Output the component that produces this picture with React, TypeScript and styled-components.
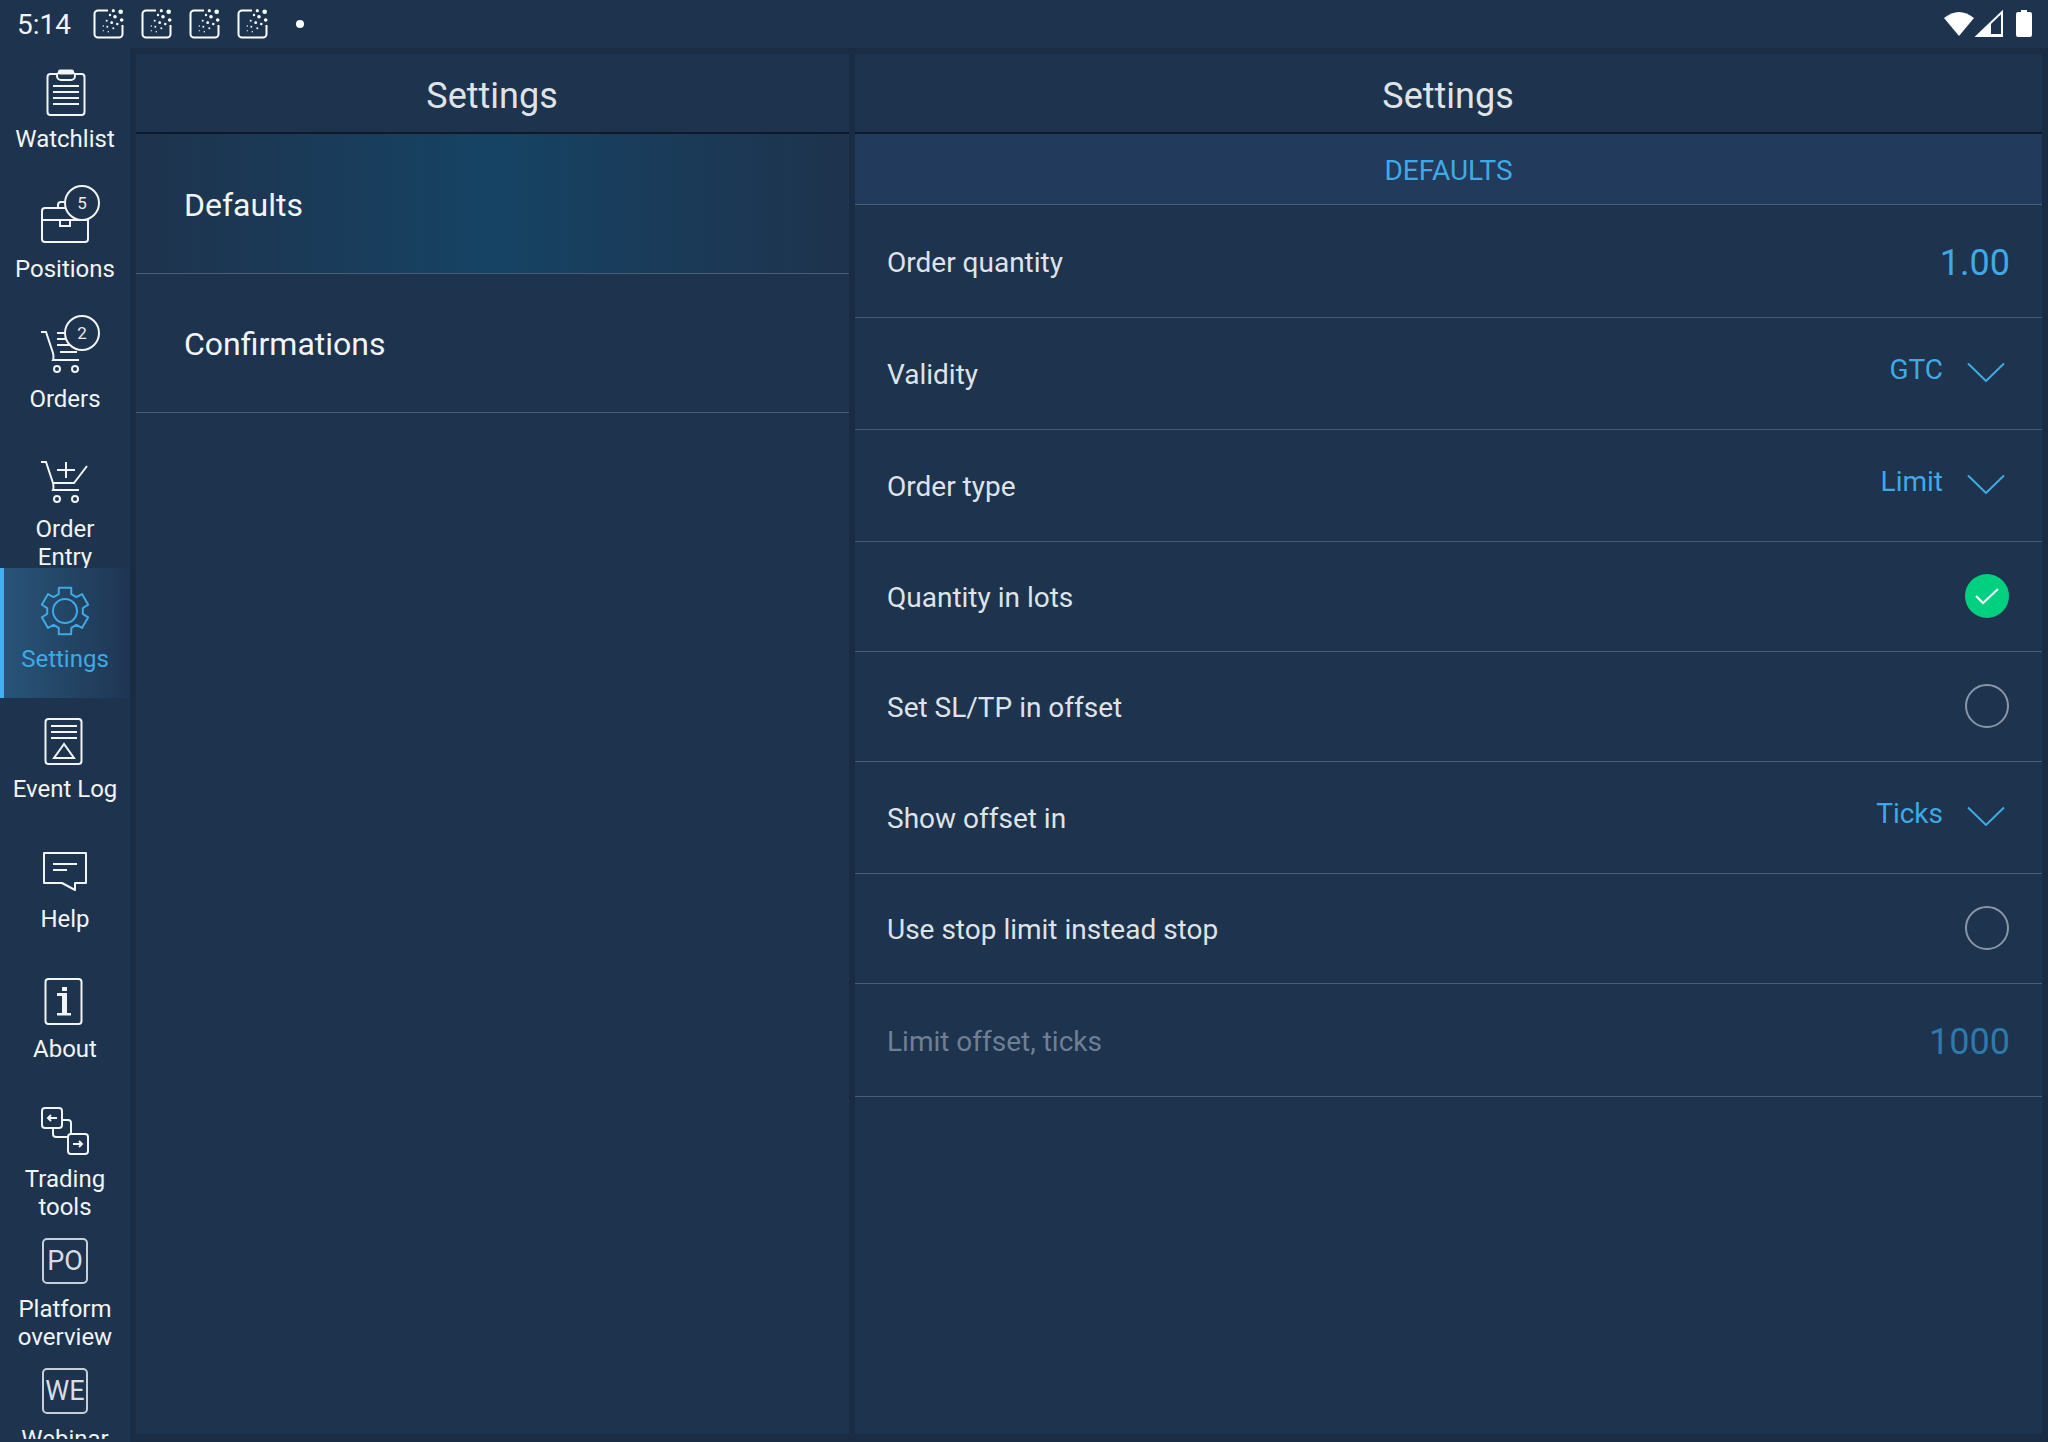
import React from 'react';
import styled, { createGlobalStyle } from 'styled-components';

const GlobalStyle = createGlobalStyle`
  html, body {
    margin: 0;
    padding: 0;
    background: #1e334d;
  }
  * {
    box-sizing: border-box;
  }
`;

const Screen = styled.div`
  width: 2048px;
  height: 1442px;
  display: flex;
  flex-direction: column;
  overflow: hidden;
  background: #1e334d;
  color: #fff;
  font-family: Roboto, 'Liberation Sans', sans-serif;
`;

const StatusBar = styled.div`
  height: 48px;
  flex: none;
  display: flex;
  align-items: center;
  padding: 0 16px 0 17px;
`;

const Clock = styled.span`
  width: 69px;
  font-size: 28px;
  color: #f2f4f6;
`;

const NotifySlot = styled.svg`
  width: 48px;
  height: 48px;
  flex: none;
`;

const StatusDot = styled.span`
  width: 8px;
  height: 8px;
  margin-left: 18px;
  border-radius: 50%;
  background: #fff;
`;

const StatusRight = styled.svg`
  margin-left: auto;
  width: 92px;
  height: 48px;
  flex: none;
`;

const Body = styled.div`
  flex: 1;
  min-height: 0;
  display: flex;
`;

const Sidebar = styled.nav`
  width: 130px;
  flex: none;
  overflow: hidden;
  height: 1391px;
`;

const NavItem = styled.div<{ $active?: boolean }>`
  position: relative;
  height: 130px;
  overflow: hidden;
  display: flex;
  flex-direction: column;
  align-items: center;
  padding-top: 12px;
  color: ${({ $active }) => ($active ? '#3fa9e6' : '#f2f4f6')};
  background: ${({ $active }) => ($active ? 'linear-gradient(to right, #285579, #1f3653)' : 'none')};
  box-shadow: ${({ $active }) => ($active ? 'inset 4px 0 0 #3fb0f2' : 'none')};
`;

const IconSlot = styled.div`
  position: relative;
  width: 80px;
  height: 65px;
  flex: none;
  display: flex;
  align-items: flex-start;
  justify-content: center;
`;

const NavLabel = styled.span`
  font-size: 24px;
  line-height: 28px;
  text-align: center;
  white-space: pre-line;
`;

const Badge = styled.span`
  position: absolute;
  left: 39px;
  top: -5px;
  width: 36px;
  height: 36px;
  border: 2px solid #f2f4f6;
  border-radius: 50%;
  background: #1e334d;
  display: flex;
  align-items: center;
  justify-content: center;
  font-size: 17px;
  color: #e8ebee;
`;

const LetterBox = styled.span`
  width: 46px;
  height: 46px;
  margin-top: 8px;
  border: 2px solid #c9cfd6;
  border-radius: 5px;
  display: flex;
  align-items: center;
  justify-content: center;
  font-size: 27px;
  color: #d9dde2;
`;

const Panels = styled.div`
  flex: 1;
  min-width: 0;
  display: flex;
  gap: 6px;
  padding: 6px 6px 8px 6px;
  background: #1a2c44;
`;

const Panel = styled.section<{ $width?: number }>`
  flex: ${({ $width }) => ($width ? `0 0 ${$width}px` : '1')};
  min-width: 0;
  background: #1e334d;
`;

const PanelTitle = styled.h1`
  height: 80px;
  margin: 0;
  padding: 6px 1px 0 0;
  display: flex;
  align-items: center;
  justify-content: center;
  border-bottom: 2px solid #0e1a2b;
  font-size: 36px;
  font-weight: 400;
  color: #dfe3e8;
`;

const MenuRow = styled.div<{ $selected?: boolean }>`
  height: ${({ $selected }) => ($selected ? 140 : 139)}px;
  padding: 2px 0 0 48px;
  display: flex;
  align-items: center;
  border-bottom: 1px solid #4b5d76;
  font-size: 32px;
  color: #f2f4f6;
  background: ${({ $selected }) =>
    $selected ? 'linear-gradient(to right, #1e334d, #164364 50%, #1e334d)' : 'none'};
`;

const SectionHead = styled.div`
  height: 71px;
  padding-top: 2px;
  display: flex;
  align-items: center;
  justify-content: center;
  border-bottom: 1px solid #4b5d76;
  background: #223a5c;
  font-size: 28px;
  color: #3fa9e6;
`;

const Row = styled.div<{ $height: number }>`
  height: ${({ $height }) => $height}px;
  padding: 0 32px;
  display: flex;
  align-items: center;
  justify-content: space-between;
  border-bottom: 1px solid #4b5d76;
`;

const RowLabel = styled.span<{ $disabled?: boolean }>`
  margin-top: 2px;
  font-size: 28px;
  color: ${({ $disabled }) => ($disabled ? '#6e7f95' : '#dfe3e8')};
`;

const NumberValue = styled.span<{ $disabled?: boolean }>`
  margin-top: 4px;
  font-size: 36px;
  color: ${({ $disabled }) => ($disabled ? '#2e78ab' : '#3fa9e6')};
`;

const Select = styled.span`
  display: flex;
  align-items: center;
  gap: 24px;
  margin-right: 5px;
  margin-bottom: 8px;
  font-size: 28px;
  color: #3fa9e6;
`;

const Chevron = styled.svg`
  width: 38px;
  height: 20px;
  flex: none;
  margin-top: 4px;
`;

const CheckOn = styled.span`
  width: 44px;
  height: 44px;
  margin: 0 1px 2px 0;
  display: flex;
  align-items: center;
  justify-content: center;
  border-radius: 50%;
  background: #00d080;
`;

const CheckOff = styled.span`
  width: 44px;
  height: 44px;
  margin: 0 1px 2px 0;
  border: 2px solid #8a96a5;
  border-radius: 50%;
`;

const line = { fill: 'none', stroke: 'currentColor', strokeWidth: 2 };

function gearPath(cx: number, cy: number, outer: number, inner: number) {
  const pts: string[] = [];
  for (let i = 0; i < 6; i++) {
    const a = ((i * 60 - 90) * Math.PI) / 180;
    const at = (r: number, d: number) =>
      `${(cx + r * Math.cos(a + d)).toFixed(1)} ${(cy + r * Math.sin(a + d)).toFixed(1)}`;
    pts.push(at(inner, -0.36), at(outer, -0.26), at(outer, 0.26), at(inner, 0.36));
  }
  return `M${pts.join(' L')} Z`;
}

const IconSvg = ({ children }: { children: React.ReactNode }) => (
  <svg width="80" height="64" viewBox="0 0 80 64">
    <g {...line}>{children}</g>
  </svg>
);

const Filled = ({ x, y, w, h }: { x: number; y: number; w: number; h: number }) => (
  <rect x={x} y={y} width={w} height={h} fill="currentColor" stroke="none" />
);

const icons: Record<string, React.ReactNode> = {
  watchlist: (
    <IconSvg>
      <rect x="22.500" y="14" width="37" height="41" rx="3" />
      <rect x="32" y="12" width="18" height="8" rx="4" fill="#1e334d" />
      <rect x="33" y="9.500" width="16" height="5" rx="2" fill="currentColor" stroke="none" />
      <path d="M28 26H54M28 32H54M28 38H54M28 44H54" />
    </IconSvg>
  ),
  positions: (
    <IconSvg>
      <rect x="17" y="18" width="46" height="34" rx="3" />
      <path d="M33 18V15a3 3 0 0 1 3-3h4" />
      <path d="M17 30H35M45 30H63" />
      <path d="M35 30V36H45V30Z" />
    </IconSvg>
  ),
  orders: (
    <IconSvg>
      <path d="M16 12H21L28 33Q29 38 28 40H54" />
      <path d="M32 13H46M32 19H46M32 25H46M35 32H52" />
      <circle cx="32" cy="49" r="3" />
      <circle cx="50" cy="49" r="3" />
    </IconSvg>
  ),
  entry: (
    <IconSvg>
      <path d="M16 12H21L28 33Q29 38 28 40H54" />
      <path d="M28 33H49L62 16" />
      <path d="M41 12V28M32 20H50" />
      <circle cx="32" cy="49" r="3" />
      <circle cx="50" cy="49" r="3" />
    </IconSvg>
  ),
  settings: (
    <IconSvg>
      <path d={gearPath(40, 31, 24, 18)} strokeLinejoin="round" />
      <circle cx="40" cy="31" r="12" />
    </IconSvg>
  ),
  eventlog: (
    <IconSvg>
      <rect x="20.500" y="9" width="36" height="45" rx="3" />
      <path d="M26 16H52M26 22H52M26 28H52" />
      <path d="M39 34L29 48H49Z" />
    </IconSvg>
  ),
  help: (
    <IconSvg>
      <path d="M19 13H61V43H50V50L37 43H19Z" strokeLinejoin="round" />
      <path d="M28 24H52M28 30H42" />
    </IconSvg>
  ),
  about: (
    <IconSvg>
      <rect x="20.500" y="9" width="36" height="45" rx="3" />
      <Filled x={37} y={17} w={5} h={4} />
      <Filled x={32} y={23} w={10} h={3} />
      <Filled x={37} y={23} w={5} h={20} />
      <Filled x={32} y={43} w={14} h={2.500} />
    </IconSvg>
  ),
  trading: (
    <IconSvg>
      <rect x="17" y="8" width="20" height="20" rx="3" />
      <rect x="43" y="34" width="20" height="20" rx="3" />
      <path d="M37 20H43Q46 20 46 23V34" />
      <path d="M28 28V34Q28 37 31 37H43" />
      <path d="M23 18H32M26 15L23 18L26 21" />
      <path d="M48 44H57M54 41L57 44L54 47" />
    </IconSvg>
  ),
};

function NotifyIcon() {
  const dots = [
    [34.700, 11.700, 2.300], [27.300, 10.700, 1.600], [35.700, 20, 1.800], [29, 16.700, 1.800],
    [24, 15, 1.200], [31.300, 24, 1.300], [25.700, 22.700, 1.400], [20.700, 20.700, 1],
    [27.300, 28.300, 1], [21.300, 26.700, 1], [17.300, 26, 0.700], [22.300, 31.700, 0.700],
    [17.300, 30.700, 0.600],
  ];
  return (
    <NotifySlot viewBox="0 0 48 48">
      <path
        d="M22 10.500H12a3.500 3.500 0 0 0-3.500 3.500V34a3.500 3.500 0 0 0 3.500 3.500H33a3.500 3.500 0 0 0 3.500-3.500V25"
        fill="none"
        stroke="#fff"
        strokeWidth="2"
      />
      {dots.map(([x, y, r], i) => (
        <circle key={i} cx={x} cy={y} r={r} fill="#fff" />
      ))}
    </NotifySlot>
  );
}

interface NavEntry {
  label: string;
  icon?: string;
  letters?: string;
  badge?: number;
  active?: boolean;
}

const navEntries: NavEntry[] = [
  { label: 'Watchlist', icon: 'watchlist' },
  { label: 'Positions', icon: 'positions', badge: 5 },
  { label: 'Orders', icon: 'orders', badge: 2 },
  { label: 'Order\nEntry', icon: 'entry' },
  { label: 'Settings', icon: 'settings', active: true },
  { label: 'Event Log', icon: 'eventlog' },
  { label: 'Help', icon: 'help' },
  { label: 'About', icon: 'about' },
  { label: 'Trading\ntools', icon: 'trading' },
  { label: 'Platform\noverview', letters: 'PO' },
  { label: 'Webinar', letters: 'WE' },
];

const ChevronDown = () => (
  <Chevron viewBox="0 0 38 20">
    <path d="M1 1.500L19 19L37 1.500" fill="none" stroke="#3fa9e6" strokeWidth="2" />
  </Chevron>
);

const SelectValue = ({ value }: { value: string }) => (
  <Select>
    {value}
    <ChevronDown />
  </Select>
);

export default function App() {
  return (
    <Screen>
      <GlobalStyle />
      <StatusBar>
        <Clock>5:14</Clock>
        <NotifyIcon />
        <NotifyIcon />
        <NotifyIcon />
        <NotifyIcon />
        <StatusDot />
        <StatusRight viewBox="0 0 92 48">
          <path d="M4 18Q19 6 34 18L19 36Z" fill="#fff" />
          <path d="M37 36L62 12V36Z" fill="none" stroke="#fff" strokeWidth="2" />
          <path d="M37 36L51 23V36ZM51 34H62V36H51Z" fill="#fff" />
          <path d="M76 14a2 2 0 0 1 2-2h3v-2h6v2h3a2 2 0 0 1 2 2V35a2 2 0 0 1-2 2H78a2 2 0 0 1-2-2Z" fill="#fff" />
        </StatusRight>
      </StatusBar>
      <Body>
        <Sidebar>
          {navEntries.map((item) => (
            <NavItem key={item.label} $active={item.active}>
              <IconSlot>
                {item.icon && icons[item.icon]}
                {item.letters && <LetterBox>{item.letters}</LetterBox>}
                {item.badge && <Badge>{item.badge}</Badge>}
              </IconSlot>
              <NavLabel>{item.label}</NavLabel>
            </NavItem>
          ))}
        </Sidebar>
        <Panels>
          <Panel $width={713}>
            <PanelTitle>Settings</PanelTitle>
            <MenuRow $selected>Defaults</MenuRow>
            <MenuRow>Confirmations</MenuRow>
          </Panel>
          <Panel>
            <PanelTitle>Settings</PanelTitle>
            <SectionHead>DEFAULTS</SectionHead>
            <Row $height={113}>
              <RowLabel>Order quantity</RowLabel>
              <NumberValue>1.00</NumberValue>
            </Row>
            <Row $height={112}>
              <RowLabel>Validity</RowLabel>
              <SelectValue value="GTC" />
            </Row>
            <Row $height={112}>
              <RowLabel>Order type</RowLabel>
              <SelectValue value="Limit" />
            </Row>
            <Row $height={110}>
              <RowLabel>Quantity in lots</RowLabel>
              <CheckOn>
                <svg width="24" height="18" viewBox="0 0 24 18">
                  <path d="M1 9L8 16L23 2" fill="none" stroke="#fff" strokeWidth="2" />
                </svg>
              </CheckOn>
            </Row>
            <Row $height={110}>
              <RowLabel>Set SL/TP in offset</RowLabel>
              <CheckOff />
            </Row>
            <Row $height={112}>
              <RowLabel>Show offset in</RowLabel>
              <SelectValue value="Ticks" />
            </Row>
            <Row $height={110}>
              <RowLabel>Use stop limit instead stop</RowLabel>
              <CheckOff />
            </Row>
            <Row $height={113}>
              <RowLabel $disabled>Limit offset, ticks</RowLabel>
              <NumberValue $disabled>1000</NumberValue>
            </Row>
          </Panel>
        </Panels>
      </Body>
    </Screen>
  );
}
